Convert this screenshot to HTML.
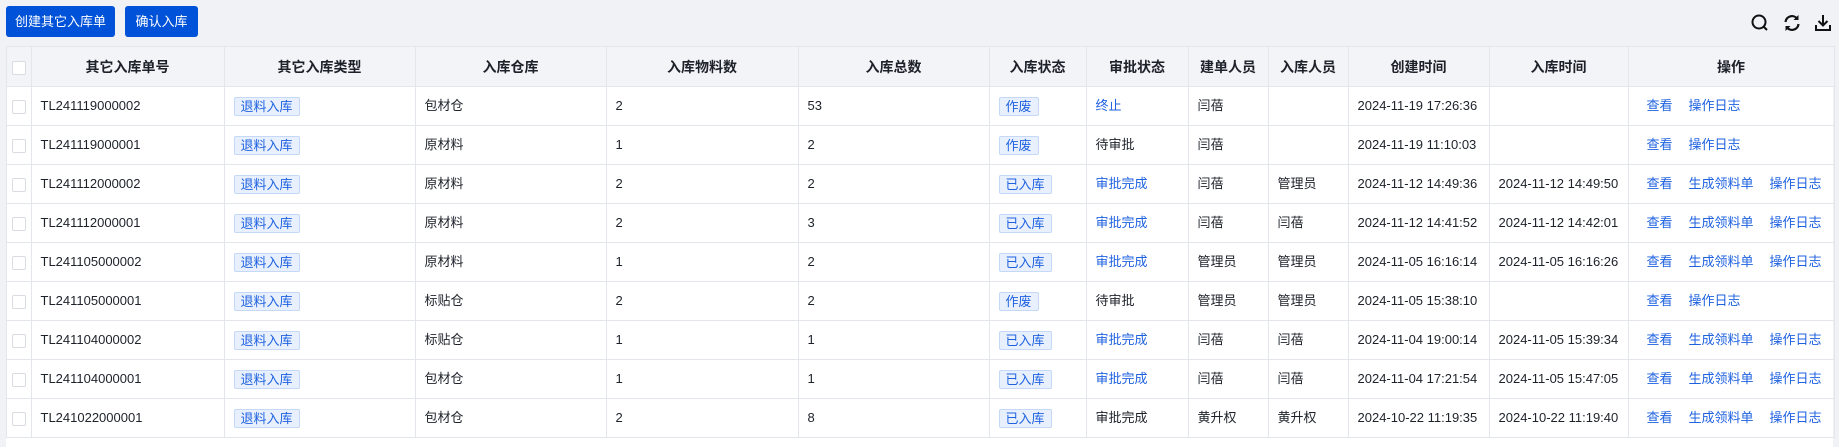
<!DOCTYPE html>
<html><head><meta charset="utf-8"><style>
*{box-sizing:border-box;margin:0;padding:0}
body{width:1839px;height:447px;background:#f0f2f5;font-family:"Liberation Sans","Noto Sans CJK SC",sans-serif;font-size:13px;color:#1d2129;position:relative;overflow:hidden}
.btn{position:absolute;top:6px;height:31px;background:#0052d9;color:#fff;border-radius:3px;font-size:13px;line-height:31px;text-align:center}
.wrap{position:absolute;left:6px;top:46px;width:1827px;height:401px;background:#fff}
table{border-collapse:collapse;table-layout:fixed;width:1828px;position:absolute;left:-0.5px;top:0}
th,td{border:1px solid #e3e6eb;height:39px;padding:0 9px;white-space:nowrap;overflow:hidden;text-align:left;line-height:16px}
th{background:#f3f4f7;font-weight:bold;font-size:14px;text-align:center;height:40px}
td.c,th.c{padding:0;text-align:center}
.cb{display:inline-block;width:14px;height:14px;border:1px solid #d9dce1;border-radius:2px;background:#fff;vertical-align:middle}
.tag{display:inline-block;height:19px;line-height:17px;padding:0 6px;background:#e8f0fd;border:1px solid #c5d8f8;color:#1f62e0;border-radius:2px;font-size:13px}
.l{color:#1f62e0}
.a{padding-left:18px}
.a span{color:#1f62e0;margin-right:16px}
.ic{position:absolute;top:13px}
</style></head><body>
<div class="btn" style="left:6px;width:109px">创建其它入库单</div>
<div class="btn" style="left:125px;width:73px">确认入库</div>
<svg class="ic" style="left:1750px" width="20" height="20" viewBox="0 0 20 20"><circle cx="9" cy="9" r="6.5" fill="none" stroke="#111" stroke-width="2"/><path d="M14 14l3 3" stroke="#111" stroke-width="2"/></svg>
<svg class="ic" style="left:1782px" width="20" height="20" viewBox="0 0 20 20"><path d="M3.5 9a6.5 6.5 0 0 1 11.5-3.5M16.5 11a6.5 6.5 0 0 1-11.5 3.5" fill="none" stroke="#111" stroke-width="2.2"/><path d="M16.5 2v5h-5zM3.5 18v-5h5z" fill="#111"/></svg>
<svg class="ic" style="left:1814px" width="18" height="20" viewBox="0 0 18 20"><path d="M9 2v10M4.5 8l4.5 4.5L13.5 8M2 12v5h14v-5" fill="none" stroke="#111" stroke-width="2"/></svg>
<div class="wrap"><table>
<colgroup><col style="width:25px"><col style="width:193px"><col style="width:191px"><col style="width:191px"><col style="width:192px"><col style="width:191px"><col style="width:97px"><col style="width:102px"><col style="width:80px"><col style="width:80px"><col style="width:141px"><col style="width:139px"><col style="width:206px"></colgroup>
<tr><th class="c"><span class="cb"></span></th><th>其它入库单号</th><th>其它入库类型</th><th>入库仓库</th><th>入库物料数</th><th>入库总数</th><th>入库状态</th><th>审批状态</th><th>建单人员</th><th>入库人员</th><th>创建时间</th><th>入库时间</th><th>操作</th></tr>
<tr><td class="c"><span class="cb"></span></td><td>TL241119000002</td><td><span class="tag">退料入库</span></td><td>包材仓</td><td>2</td><td>53</td><td><span class="tag">作废</span></td><td class="l">终止</td><td>闫蓓</td><td></td><td>2024-11-19 17:26:36</td><td></td><td class="a"><span>查看</span><span>操作日志</span></td></tr>
<tr><td class="c"><span class="cb"></span></td><td>TL241119000001</td><td><span class="tag">退料入库</span></td><td>原材料</td><td>1</td><td>2</td><td><span class="tag">作废</span></td><td>待审批</td><td>闫蓓</td><td></td><td>2024-11-19 11:10:03</td><td></td><td class="a"><span>查看</span><span>操作日志</span></td></tr>
<tr><td class="c"><span class="cb"></span></td><td>TL241112000002</td><td><span class="tag">退料入库</span></td><td>原材料</td><td>2</td><td>2</td><td><span class="tag">已入库</span></td><td class="l">审批完成</td><td>闫蓓</td><td>管理员</td><td>2024-11-12 14:49:36</td><td>2024-11-12 14:49:50</td><td class="a"><span>查看</span><span>生成领料单</span><span>操作日志</span></td></tr>
<tr><td class="c"><span class="cb"></span></td><td>TL241112000001</td><td><span class="tag">退料入库</span></td><td>原材料</td><td>2</td><td>3</td><td><span class="tag">已入库</span></td><td class="l">审批完成</td><td>闫蓓</td><td>闫蓓</td><td>2024-11-12 14:41:52</td><td>2024-11-12 14:42:01</td><td class="a"><span>查看</span><span>生成领料单</span><span>操作日志</span></td></tr>
<tr><td class="c"><span class="cb"></span></td><td>TL241105000002</td><td><span class="tag">退料入库</span></td><td>原材料</td><td>1</td><td>2</td><td><span class="tag">已入库</span></td><td class="l">审批完成</td><td>管理员</td><td>管理员</td><td>2024-11-05 16:16:14</td><td>2024-11-05 16:16:26</td><td class="a"><span>查看</span><span>生成领料单</span><span>操作日志</span></td></tr>
<tr><td class="c"><span class="cb"></span></td><td>TL241105000001</td><td><span class="tag">退料入库</span></td><td>标贴仓</td><td>2</td><td>2</td><td><span class="tag">作废</span></td><td>待审批</td><td>管理员</td><td>管理员</td><td>2024-11-05 15:38:10</td><td></td><td class="a"><span>查看</span><span>操作日志</span></td></tr>
<tr><td class="c"><span class="cb"></span></td><td>TL241104000002</td><td><span class="tag">退料入库</span></td><td>标贴仓</td><td>1</td><td>1</td><td><span class="tag">已入库</span></td><td class="l">审批完成</td><td>闫蓓</td><td>闫蓓</td><td>2024-11-04 19:00:14</td><td>2024-11-05 15:39:34</td><td class="a"><span>查看</span><span>生成领料单</span><span>操作日志</span></td></tr>
<tr><td class="c"><span class="cb"></span></td><td>TL241104000001</td><td><span class="tag">退料入库</span></td><td>包材仓</td><td>1</td><td>1</td><td><span class="tag">已入库</span></td><td class="l">审批完成</td><td>闫蓓</td><td>闫蓓</td><td>2024-11-04 17:21:54</td><td>2024-11-05 15:47:05</td><td class="a"><span>查看</span><span>生成领料单</span><span>操作日志</span></td></tr>
<tr><td class="c"><span class="cb"></span></td><td>TL241022000001</td><td><span class="tag">退料入库</span></td><td>包材仓</td><td>2</td><td>8</td><td><span class="tag">已入库</span></td><td>审批完成</td><td>黄升权</td><td>黄升权</td><td>2024-10-22 11:19:35</td><td>2024-10-22 11:19:40</td><td class="a"><span>查看</span><span>生成领料单</span><span>操作日志</span></td></tr>
</table></div>
</body></html>
